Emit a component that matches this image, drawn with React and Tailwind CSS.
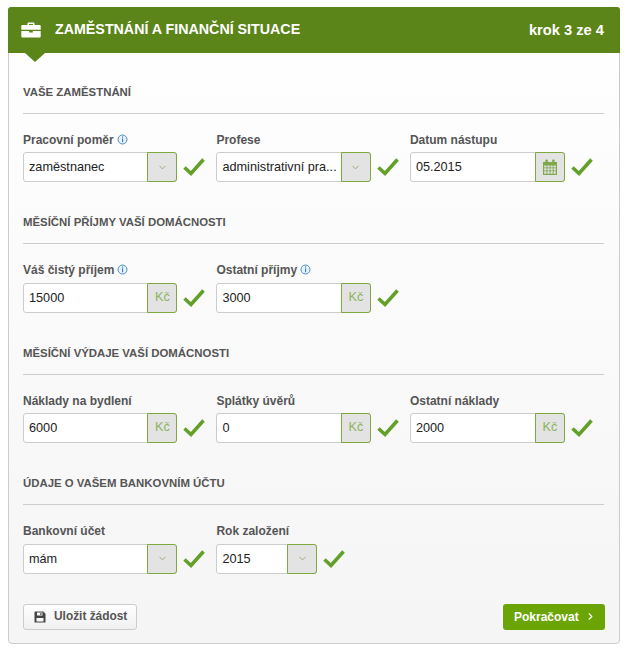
import { ChevronDown, ChevronRight } from "lucide-react";

const FONT = "[font-family:'Liberation_Sans',Arial,sans-serif]";

function InfoIcon() {
  return (
    <svg width="11" height="11" viewBox="0 0 11 11" className="ml-[3px] inline-block align-[-1px]">
      <circle cx="5.5" cy="5.5" r="4.5" fill="#e8f1f8" stroke="#4a90c4" strokeWidth="1" />
      <rect x="5" y="2.4" width="1.1" height="1.2" fill="#3a80b8" />
      <rect x="5" y="4.4" width="1.1" height="3.8" fill="#3a80b8" />
    </svg>
  );
}

function Check() {
  return (
    <svg width="22" height="20" viewBox="0 0 22 20" className="ml-[6px] shrink-0">
      <path d="M1.5 10.5 L8 16.5 L20.5 2.5" fill="none" stroke="#62a02a" strokeWidth="3.6" />
    </svg>
  );
}

function CalendarIcon() {
  return (
    <svg width="16" height="17" viewBox="0 0 16 17">
      <path
        d="M1 3h14v13H1z M2.2 6.5v2h2.3v-2z M5.4 6.5v2h2.2v-2z M8.5 6.5v2h2.2v-2z M11.6 6.5v2h2.2v-2z M2.2 9.3v2.2h2.3V9.3z M5.4 9.3v2.2h2.2V9.3z M8.5 9.3v2.2h2.2V9.3z M11.6 9.3v2.2h2.2V9.3z M2.2 12.3v2.5h2.3v-2.5z M5.4 12.3v2.5h2.2v-2.5z M8.5 12.3v2.5h2.2v-2.5z M11.6 12.3v2.5h2.2v-2.5z"
        fill="#7fa84e"
        fillRule="evenodd"
      />
      <rect x="3.4" y="0.5" width="2.4" height="4.4" rx="1" fill="#7fa84e" />
      <rect x="10.2" y="0.5" width="2.4" height="4.4" rx="1" fill="#7fa84e" />
    </svg>
  );
}

function BriefcaseIcon() {
  return (
    <svg width="20" height="16" viewBox="0 0 20 16">
      <path d="M6.5 3V1.6C6.5.8 7.1.5 7.7.5h4.6c.6 0 1.2.3 1.2 1.1V3h-1.5V2h-4v1z" fill="#fff" />
      <path d="M1.5 3h17c.6 0 1.2.5 1.2 1.2v3.6H0.300V4.200C.3 3.500.9 3 1.500 3z" fill="#fff" />
      <path d="M.3 9h7.9v1.400h3.600V9h7.900v5.400c0 .7-.6 1.200-1.200 1.200h-17c-.6 0-1.200-.5-1.200-1.200z" fill="#fff" />
    </svg>
  );
}

function SaveIcon() {
  return (
    <svg width="12" height="12" viewBox="0 0 12 12">
      <path
        d="M1 .5h8.300L11.500 2.700V11.500H.5V1z M3 1.500v3h5.500v-3z M2.500 7v3.500h7V7z"
        fill="#444"
        fillRule="evenodd"
      />
      <rect x="6.300" y="2" width="1.200" height="2" fill="#444" />
    </svg>
  );
}

function Field({ label, info, value, addon, width = "w-[154.45px]" }) {
  return (
    <div className="w-[193.45px] shrink-0">
      <div className="h-4 text-xs leading-4 font-bold text-[#555]">
        {label}
        {info && <InfoIcon />}
      </div>
      <div className="mt-[4.5px] flex items-center">
        <div className={`flex h-[30px] ${width} overflow-hidden rounded-[3px] border border-[#ccc] bg-white`}>
          <div className="min-w-0 flex-1 truncate pl-[5px] text-[12.7px] leading-[29px] text-[#222]">{value}</div>
        </div>
        <div className="z-10 -ml-[30px] flex h-[30px] w-[30px] shrink-0 items-center justify-center rounded-r-[3px] border border-[#7fa83f] bg-[#e3e3e3]">
          {addon === "select" && <ChevronDown size={11} strokeWidth={2} color="#8fa874" />}
          {addon === "date" && <CalendarIcon />}
          {addon === "kc" && <span className="text-[12.7px] text-[#8cb35c]">Kč</span>}
        </div>
        <Check />
      </div>
    </div>
  );
}

function Section({ title, children, first }) {
  return (
    <section className={first ? "pt-[30.5px]" : "pt-[32px]"}>
      <h2 className="h-4 text-[11.4px] leading-4 font-bold text-[#555] uppercase">{title}</h2>
      <div className="mt-[13px] mr-[1px] h-px bg-[#ccc]" />
      <div className="mt-[18px] flex">{children}</div>
    </section>
  );
}

export default function App() {
  return (
    <div className={`${FONT} min-h-[649px] bg-white pt-[7px]`}>
      <div className="mx-[8px] h-[637px] w-[612px] rounded-[4px] border border-[#ccc] bg-gradient-to-b from-white to-[#f5f5f5]">
        <header className="relative -mx-px -mt-px flex h-[46px] items-center justify-between rounded-t-[3px] bg-[#5b8419] pr-[16px] pl-[13px] text-white">
          <div className="flex items-center">
            <BriefcaseIcon />
            <h1 className="ml-[14px] text-[14.25px] font-bold uppercase">Zaměstnání a finanční situace</h1>
          </div>
          <span className="text-[14.7px] font-bold">krok 3 ze 4</span>
          <span className="absolute top-[46px] left-[17px] h-0 w-0 border-x-[10px] border-t-[9px] border-x-transparent border-t-[#5b8419]" />
        </header>
        <div className="pr-[14px] pl-[14px]">
          <Section title="Vaše zaměstnání" first>
            <Field label="Pracovní poměr" info value="zaměstnanec" addon="select" />
            <Field label="Profese" value="administrativní pra..." addon="select" />
            <Field label="Datum nástupu" value="05.2015" addon="date" width="w-[155px]" />
          </Section>
          <Section title="Měsíční příjmy vaší domácnosti">
            <Field label="Váš čistý příjem" info value="15000" addon="kc" />
            <Field label="Ostatní příjmy" info value="3000" addon="kc" />
          </Section>
          <Section title="Měsíční výdaje vaší domácnosti">
            <Field label="Náklady na bydlení" value="6000" addon="kc" />
            <Field label="Splátky úvěrů" value="0" addon="kc" />
            <Field label="Ostatní náklady" value="2000" addon="kc" width="w-[155px]" />
          </Section>
          <Section title="Údaje o vašem bankovním účtu">
            <Field label="Bankovní účet" value="mám" addon="select" />
            <Field label="Rok založení" value="2015" addon="select" width="w-[101px]" />
          </Section>
          <div className="mt-[30px] flex items-center justify-between">
            <button className="flex h-[26px] w-[114px] items-center rounded-[3px] border border-[#ccc] bg-gradient-to-b from-white to-[#f0f0f0] pl-[10px] text-[11.9px] font-bold text-[#555]">
              <SaveIcon />
              <span className="ml-[8px]">Uložit žádost</span>
            </button>
            <button className="flex h-[26px] w-[102px] items-center justify-between rounded-[3px] bg-[#6aa505] pr-[9px] pl-[11px] text-xs font-bold text-white">
              <span>Pokračovat</span>
              <ChevronRight size={11} strokeWidth={2.5} />
            </button>
          </div>
        </div>
      </div>
    </div>
  );
}
